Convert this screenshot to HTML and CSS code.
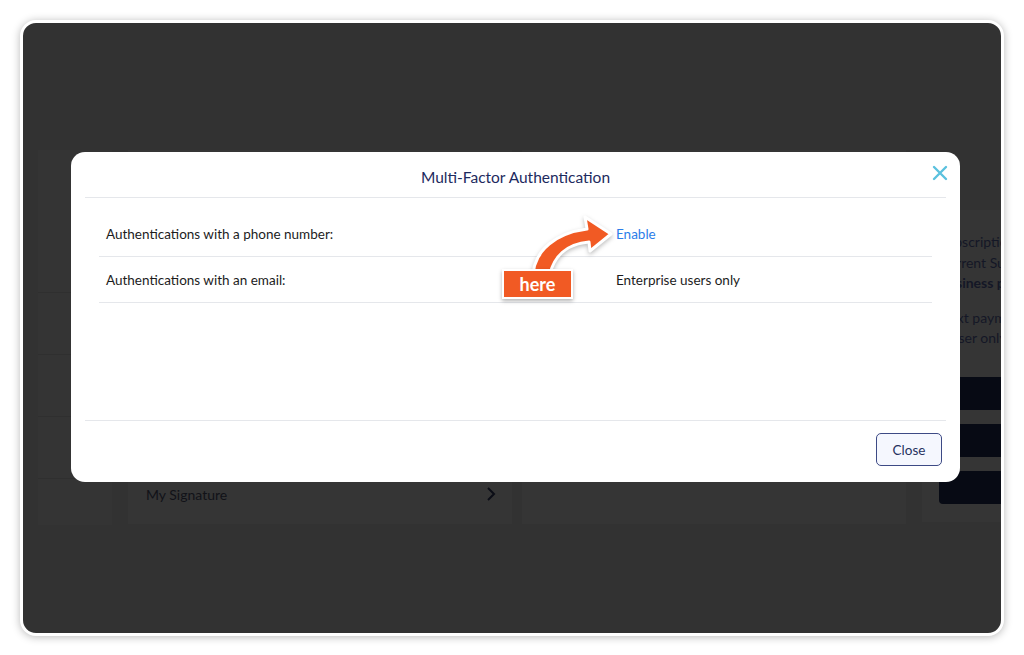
FILE: index.html
```html
<!DOCTYPE html>
<html lang="en">
<head>
    <meta charset="UTF-8">
    <meta name="viewport" content="width=device-width, initial-scale=1.0">
    <title>Multi-Factor Authentication</title>
    <link rel="stylesheet" href="styles.css">
</head>
<body>
    <div class="frame">
        <!-- Página de fondo (atenuada por el modal) -->
        <div class="page">
            <div class="side-col">
                <div class="side-cell tall"></div>
                <div class="side-cell"></div>
                <div class="side-cell"></div>
                <div class="side-cell"></div>
                <div class="side-cell last"></div>
            </div>
            <div class="settings-col">
                <div class="settings-item">
                    <span>My Signature</span>
                    <svg class="chevron" viewBox="0 0 10 16" width="10" height="16">
                        <path d="M2 2 L8 8 L2 14" fill="none" stroke="#0b0d16" stroke-width="2"/>
                    </svg>
                </div>
            </div>
            <div class="middle-col"></div>
            <div class="plan-col">
                <p class="plan-title">Subscription</p>
                <p>Current Subscription</p>
                <p class="plan-name">Business plan</p>
                <p class="plan-gap">Next payment</p>
                <p>1 user only</p>
                <div class="plan-buttons">
                    <div class="plan-button"></div>
                    <div class="plan-button"></div>
                    <div class="plan-button"></div>
                </div>
            </div>
        </div>

        <!-- Modal -->
        <div class="modal">
            <div class="modal-header">
                <h2 class="modal-title">Multi-Factor Authentication</h2>
                <svg class="modal-x" viewBox="0 0 16 16" width="16" height="16">
                    <path d="M2 2 L14 14 M14 2 L2 14" stroke="#5bc1de" stroke-width="2.4" stroke-linecap="round"/>
                </svg>
            </div>
            <div class="modal-body">
                <div class="mfa-row">
                    <span class="mfa-label">Authentications with a phone number:</span>
                    <a class="mfa-link" href="#">Enable</a>
                </div>
                <div class="mfa-row">
                    <span class="mfa-label">Authentications with an email:</span>
                    <span class="mfa-value">Enterprise users only</span>
                </div>
            </div>
            <div class="modal-footer">
                <button class="close-button">Close</button>
            </div>

            <!-- Anotación -->
            <svg class="hint-arrow" viewBox="511 207 120 80" width="120" height="80">
                <path d="M533 274 C535 250 556 233 587 229 L585 217 L611 234 L590 251 L589 242 C566 244 554 257 550 274 Z"
                      fill="#f15a24" stroke="#ffffff" stroke-width="3" stroke-linejoin="round"/>
            </svg>
            <div class="hint-label">here</div>
        </div>
    </div>
</body>
</html>
```

FILE: styles.css
```css
body {
    margin: 0;
    padding: 20px;
    background: #ffffff;
    font-family: 'Lato', 'Liberation Sans', sans-serif;
}

.frame {
    position: relative;
    width: 984px;
    height: 616px;
    box-sizing: border-box;
    border: 3px solid #ffffff;
    border-radius: 16px;
    background: #323232;
    box-shadow: 0 1px 8px rgba(0, 0, 0, 0.28);
    overflow: hidden;
}

/* Fondo */
.page {
    display: flex;
    align-items: flex-start;
    padding: 127px 0 0 15px;
    color: #111218;
}

.page > div {
    flex-shrink: 0;
}

.side-col {
    width: 74px;
    display: flex;
    flex-direction: column;
    background: #343434;
}

.side-cell {
    height: 61px;
    border-bottom: 1px solid #2f2f2f;
}

.side-cell.tall {
    height: 142px;
}

.side-cell.last {
    height: 46px;
    border-bottom: none;
}

.settings-col {
    width: 384px;
    height: 374px;
    margin-left: 16px;
    padding-bottom: 7px;
    box-sizing: border-box;
    display: flex;
    flex-direction: column;
    justify-content: flex-end;
    background: #353535;
}

.settings-item {
    display: flex;
    justify-content: space-between;
    align-items: center;
    height: 46px;
    padding: 0 16px 0 18px;
    font-size: 14px;
}

.middle-col {
    width: 384px;
    height: 374px;
    margin-left: 10px;
    background: #353535;
}

.plan-col {
    width: 120px;
    height: 312px;
    margin: 60px 0 0 16px;
    padding: 22px 0 0 17px;
    box-sizing: border-box;
    background: #353535;
    font-size: 14px;
    color: #141726;
    white-space: nowrap;
}

.plan-col p {
    margin: 0;
    line-height: 20.5px;
}

.plan-col .plan-name {
    font-weight: 700;
}

.plan-col .plan-gap {
    margin-top: 14px;
}

.plan-buttons {
    display: flex;
    flex-direction: column;
    gap: 14px;
    margin-top: 28px;
}

.plan-button {
    height: 33px;
    border-radius: 4px;
    background: #070a14;
}

/* Modal */
.modal {
    position: absolute;
    left: 48px;
    top: 129px;
    width: 889px;
    height: 330px;
    display: flex;
    flex-direction: column;
    background: #ffffff;
    border-radius: 14px;
}

.modal-header {
    position: relative;
    height: 46px;
    margin: 0 14px;
    padding-top: 4px;
    box-sizing: border-box;
    border-bottom: 1px solid #e5e7eb;
    display: flex;
    justify-content: center;
    align-items: center;
}

.modal-title {
    margin: 0;
    font-size: 15.5px;
    font-weight: 400;
    color: #1d2a5e;
}

.modal-x {
    position: absolute;
    right: -2px;
    top: 13px;
}

.modal-body {
    flex: 1;
    padding: 13px 28px 0;
}

.mfa-row {
    display: flex;
    align-items: center;
    height: 45px;
    padding-left: 7px;
    border-bottom: 1px solid #e5e7eb;
    font-size: 13.5px;
    color: #1c1c1c;
}

.mfa-label {
    width: 510px;
}

.mfa-link {
    color: #2b7de9;
    text-decoration: none;
}

.modal-footer {
    margin: 0 14px;
    padding: 12px 4px 16px 0;
    border-top: 1px solid #e5e7eb;
    display: flex;
    justify-content: flex-end;
}

.close-button {
    width: 66px;
    height: 33px;
    border: 1px solid #3d4a85;
    border-radius: 5px;
    background: #f5f7fe;
    color: #27325f;
    font-family: inherit;
    font-size: 13.5px;
    cursor: pointer;
}

/* Anotación */
.hint-arrow {
    position: absolute;
    left: 440px;
    top: 55px;
    filter: drop-shadow(0 2px 2px rgba(0, 0, 0, 0.25));
}

.hint-label {
    position: absolute;
    left: 431px;
    top: 117px;
    width: 67px;
    height: 26px;
    border: 2px solid #ffffff;
    background: #f15a24;
    color: #ffffff;
    font-size: 18px;
    font-weight: 700;
    line-height: 26px;
    text-align: center;
    box-shadow: 0 2px 4px rgba(0, 0, 0, 0.3);
}
```
